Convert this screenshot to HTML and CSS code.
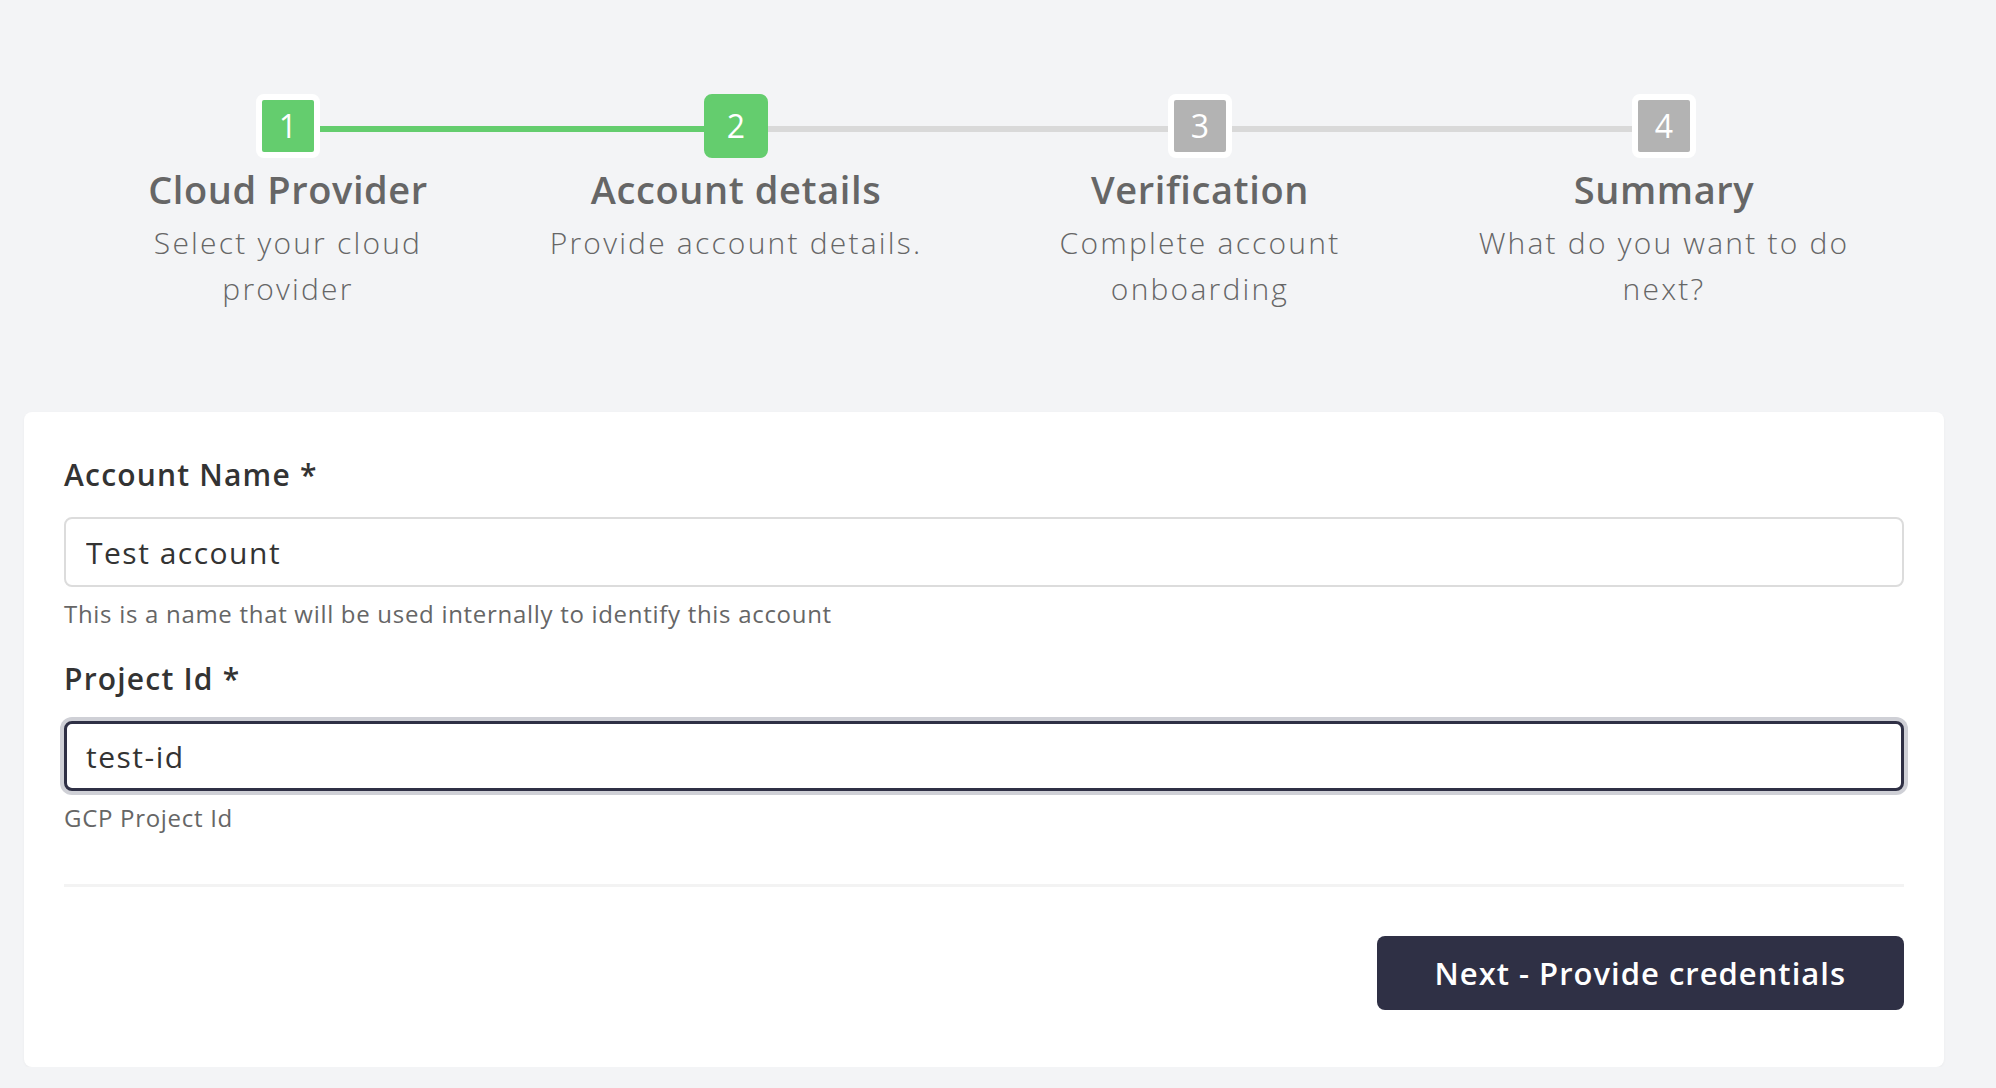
FILE: index.html
```html
<!DOCTYPE html>
<html lang="en">
<head>
    <meta charset="UTF-8">
    <meta name="viewport" content="width=device-width, initial-scale=1.0">
    <title>Add Cloud Account</title>
    <link rel="stylesheet" href="styles.css">
</head>
<body>
    <div class="stepper">
        <div class="step done">
            <div class="step-box">1</div>
            <h3 class="step-title">Cloud Provider</h3>
            <p class="step-desc">Select your cloud provider</p>
        </div>
        <div class="step active">
            <div class="step-box">2</div>
            <h3 class="step-title">Account details</h3>
            <p class="step-desc">Provide account details.</p>
        </div>
        <div class="step">
            <div class="step-box">3</div>
            <h3 class="step-title">Verification</h3>
            <p class="step-desc">Complete account onboarding</p>
        </div>
        <div class="step last">
            <div class="step-box">4</div>
            <h3 class="step-title">Summary</h3>
            <p class="step-desc">What do you want to do next?</p>
        </div>
    </div>

    <div class="card">
        <form class="account-form">
            <div class="field">
                <label for="accountName">Account Name *</label>
                <input type="text" id="accountName" value="Test account">
                <p class="hint">This is a name that will be used internally to identify this account</p>
            </div>
            <div class="field">
                <label for="projectId">Project Id *</label>
                <input type="text" id="projectId" value="test-id" class="focused">
                <p class="hint">GCP Project Id</p>
            </div>
            <div class="form-footer">
                <button type="button" class="btn-next">Next - Provide credentials</button>
            </div>
        </form>
    </div>
</body>
</html>
```

FILE: styles.css
```css
body {
    margin: 0;
    font-family: "Open Sans", Lato, Arial, sans-serif;
    background-color: #f3f4f6;
}

/* stepper */
.stepper {
    display: grid;
    grid-template-columns: 432px 464px 464px 464px;
    padding: 94px 0 0 72px;
    height: 412px;
    box-sizing: border-box;
}

.step {
    position: relative;
    display: flex;
    flex-direction: column;
    align-items: center;
    text-align: center;
}

.step::after {
    content: "";
    position: absolute;
    top: 32px;
    left: 50%;
    width: 100%;
    height: 6px;
    background-color: #d9d9d9;
}

.step.done::after {
    background-color: #64cd6e;
}

.step.last::after {
    display: none;
}

.step-box {
    position: relative;
    z-index: 1;
    width: 52px;
    height: 52px;
    border: 6px solid #fff;
    border-radius: 8px;
    background-color: #b3b3b3;
    color: #fff;
    font-size: 32px;
    line-height: 52px;
    font-weight: 400;
}

.step.done .step-box {
    background-color: #64cd6e;
}

.step.active .step-box {
    background-color: #64cd6e;
    border-color: #64cd6e;
}

.step-title {
    margin: 7px 0 0;
    font-size: 38px;
    line-height: 48px;
    font-weight: 600;
    letter-spacing: 0.6px;
    color: #666;
}

.step-desc {
    margin: 7px 0 0;
    max-width: 400px;
    font-size: 30px;
    line-height: 46px;
    font-weight: 300;
    letter-spacing: 2.2px;
    color: #666;
}

/* form card */
.card {
    margin: 0 52px 0 24px;
    padding: 45px 40px 57px;
    background-color: #fff;
    border-radius: 8px;
    box-shadow: 0 1px 3px rgba(0, 0, 0, 0.04);
}

.field {
    margin-bottom: 32px;
}

.field label {
    display: block;
    font-size: 30px;
    line-height: 36px;
    font-weight: 600;
    letter-spacing: 1.2px;
    color: #333;
    margin-bottom: 24px;
}

.field input {
    display: block;
    width: 100%;
    height: 70px;
    box-sizing: border-box;
    padding: 0 20px;
    border: 2px solid #dcdcdc;
    border-radius: 8px;
    font-family: inherit;
    font-size: 30px;
    letter-spacing: 1.5px;
    color: #333;
    outline: none;
}

.field input.focused {
    border: 3px solid #2f3045;
    box-shadow: 0 0 0 4px #cfd0d6;
    padding: 0 19px;
}

.hint {
    margin: 12px 0 0;
    font-size: 24px;
    line-height: 30px;
    letter-spacing: 0.7px;
    color: #666;
}

.form-footer {
    display: flex;
    justify-content: flex-end;
    border-top: 3px solid #f3f3f3;
    margin-top: 51px;
    padding-top: 49px;
}

.field:last-of-type {
    margin-bottom: 0;
}

.btn-next {
    height: 74px;
    padding: 0 58px;
    border: none;
    border-radius: 8px;
    background-color: #2f3045;
    color: #fff;
    font-family: inherit;
    font-size: 31px;
    font-weight: 600;
    letter-spacing: 1px;
    cursor: pointer;
}
```
